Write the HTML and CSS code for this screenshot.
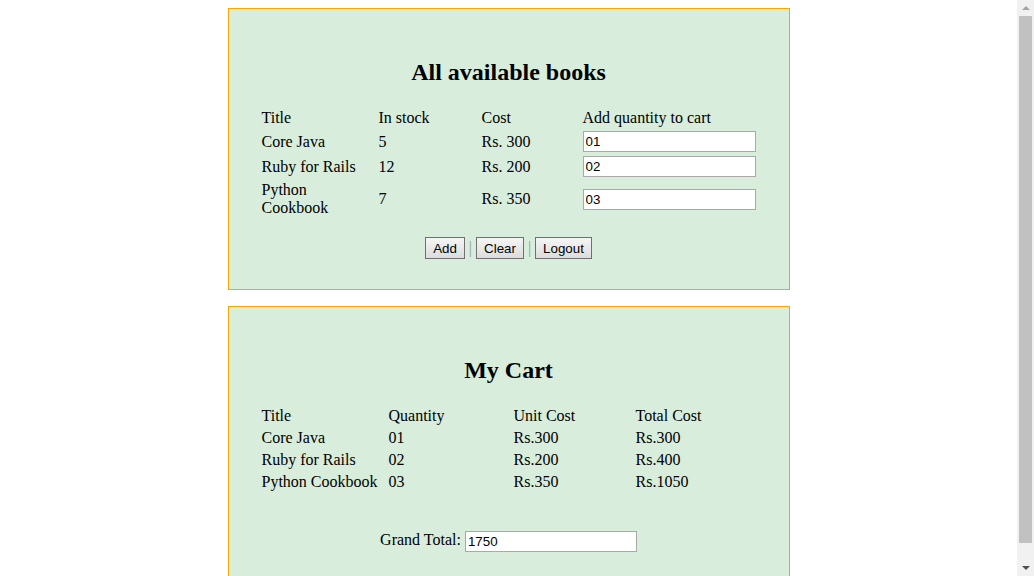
FILE: index.html
```html
<!DOCTYPE html>
<html>
<head>
<meta charset="utf-8">
<title>Books</title>
<link rel="stylesheet" href="styles.css">
</head>
<body>
<div class="panel">
  <h2 class="panel-title">All available books</h2>
  <table class="grid books">
    <tr><td class="c1">Title</td><td class="c2">In stock</td><td class="c3">Cost</td><td class="c4">Add quantity to cart</td></tr>
    <tr><td>Core Java</td><td>5</td><td>Rs. 300</td><td><input class="field" type="text" value="01"></td></tr>
    <tr><td>Ruby for Rails</td><td>12</td><td>Rs. 200</td><td><input class="field" type="text" value="02"></td></tr>
    <tr><td>Python Cookbook</td><td>7</td><td>Rs. 350</td><td><input class="field" type="text" value="03"></td></tr>
  </table>
  <div class="actions">
    <button class="btn" type="button">Add</button> <span class="sep">|</span> <button class="btn" type="button">Clear</button> <span class="sep">|</span> <button class="btn" type="button">Logout</button>
  </div>
</div>
<div class="panel">
  <h2 class="panel-title">My Cart</h2>
  <table class="grid cart">
    <tr><td class="k1">Title</td><td class="k2">Quantity</td><td class="k3">Unit Cost</td><td class="k4">Total Cost</td></tr>
    <tr><td>Core Java</td><td>01</td><td>Rs.300</td><td>Rs.300</td></tr>
    <tr><td>Ruby for Rails</td><td>02</td><td>Rs.200</td><td>Rs.400</td></tr>
    <tr><td>Python Cookbook</td><td>03</td><td>Rs.350</td><td>Rs.1050</td></tr>
  </table>
  <div class="total">
    Grand Total: <input class="field" type="text" value="1750">
  </div>
</div>
<div class="scrollbar" aria-hidden="true">
  <span class="arrow arrow-up"></span>
  <span class="thumb"></span>
  <span class="arrow arrow-down"></span>
</div>
</body>
</html>
```

FILE: styles.css
```css
html, body {
  margin: 0;
  padding: 0;
}
body {
  margin: 8px 25px 8px 8px;
  font-family: "Liberation Serif", "Times New Roman", serif;
  font-size: 16px;
  color: #000;
  background: #fff;
}
.panel {
  width: 560px;
  margin: 0 auto 16px;
  border: 1px solid #ffa500;
  background: #d8eddc;
  padding: 30px 0 30px;
}
.panel-title {
  font-size: 24px;
  font-weight: bold;
  text-align: center;
  margin: 20px 0;
}
.grid {
  width: 500px;
  margin: 0 auto;
  border-collapse: separate;
  border-spacing: 2px;
  table-layout: fixed;
}
.grid td {
  padding: 1px;
  vertical-align: middle;
  text-align: left;
}
.books .c1 { width: 113px; }
.books .c2 { width: 99px; }
.books .c3 { width: 97px; }
.cart .k1 { width: 123px; }
.cart .k2 { width: 121px; }
.cart .k3 { width: 118px; }
.field {
  box-sizing: border-box;
  width: 173px;
  height: 21px;
  border: 1px solid #a9a9a9;
  padding: 1px 2px;
  margin: 0;
  font-family: "Liberation Sans", Arial, sans-serif;
  font-size: 13.33px;
  background: #fff;
  color: #000;
  vertical-align: middle;
}
.actions {
  text-align: center;
  margin-top: 16px;
  line-height: 22px;
}
.btn {
  box-sizing: border-box;
  font-family: "Liberation Sans", Arial, sans-serif;
  font-size: 13.33px;
  height: 22px;
  padding: 0 7px;
  margin: 0;
  border: 1px solid #707070;
  border-radius: 0;
  background: linear-gradient(#f5f5f5, #dcdcdc);
  color: #000;
  vertical-align: middle;
}
.sep {
  color: #999;
  vertical-align: middle;
}
.total {
  text-align: center;
  margin-top: 37px;
}
.total .field {
  width: 172px;
}
.scrollbar {
  position: fixed;
  top: 0;
  right: 0;
  width: 17px;
  height: 100%;
  background: #f1f1f1;
  display: flex;
  flex-direction: column;
  align-items: center;
}
.arrow {
  width: 0;
  height: 0;
  border-left: 4px solid transparent;
  border-right: 4px solid transparent;
  margin: 6px 0;
}
.arrow-up {
  border-bottom: 4px solid #a3a3a3;
}
.arrow-down {
  border-top: 4px solid #505050;
}
.thumb {
  flex: 1;
  width: 13px;
  background: #c1c1c1;
  margin: 0 0 17px;
}
```
